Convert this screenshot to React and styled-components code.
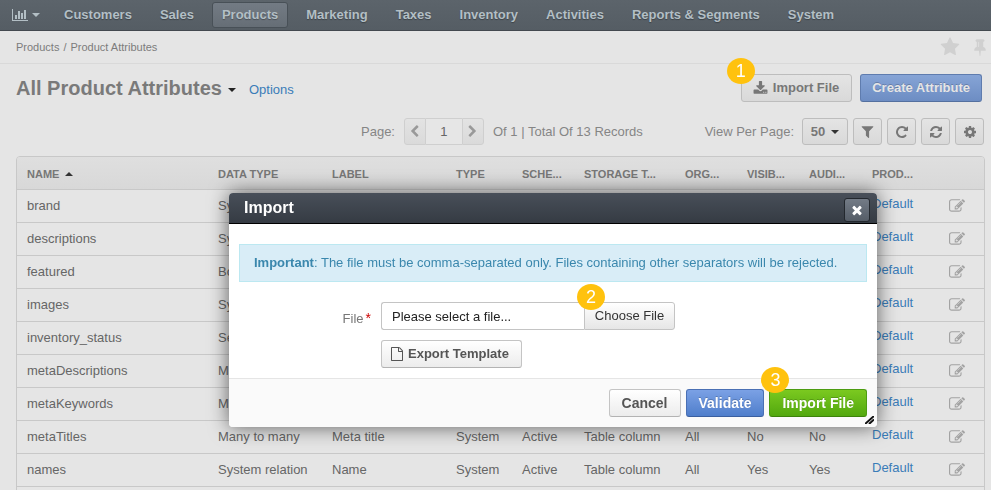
import React from "react";
import styled, { createGlobalStyle, css } from "styled-components";

const GlobalStyle = createGlobalStyle`
  *, *::before, *::after { box-sizing: border-box; }
  body {
    margin: 0;
    background: #e5e5e5;
    color: #666;
    font: 13px/18px "Liberation Sans", Arial, sans-serif;
  }
  button, input { font: inherit; color: inherit; margin: 0; }
  a { color: #3a7cb8; text-decoration: none; }
`;

/* ---------- icons ---------- */

const PATHS = {
  chart:
    "M640 896v512h-256v-512h256zm384-512v1024h-256v-1024h256zm1024 1152v128h-2048v-1536h128v1408h1920zm-640-896v768h-256v-768h256zm384-384v1152h-256v-1152h256z",
  download:
    "M1344 1344q0-26-19-45t-45-19-45 19-19 45 19 45 45 19 45-19 19-45zm256 0q0-26-19-45t-45-19-45 19-19 45 19 45 45 19 45-19 19-45zm128-224v320q0 40-28 68t-68 28h-1472q-40 0-68-28t-28-68v-320q0-40 28-68t68-28h465l135 136q58 56 136 56t136-56l136-136h464q40 0 68 28t28 68zm-325-569q17 41-14 70l-448 448q-18 19-45 19t-45-19l-448-448q-31-29-14-70 17-39 59-39h256v-448q0-26 19-45t45-19h256q26 0 45 19t19 45v448h256q42 0 59 39z",
  filter:
    "M1595 295q17 41-14 70l-493 493v742q0 42-39 59-13 5-25 5-27 0-45-19l-256-256q-19-19-19-45v-486l-493-493q-31-29-14-70 17-39 59-39h1280q42 0 59 39z",
  repeat:
    "M1664 256v448q0 26-19 45t-45 19h-448q-42 0-59-40-17-39 14-69l138-138q-148-137-349-137-104 0-198.5 40.5t-163.5 109.5-109.5 163.5-40.5 198.5 40.5 198.5 109.5 163.5 163.5 109.5 198.5 40.5q119 0 225-52t179-147q7-10 23-12 15 0 25 9l137 138q9 8 9.5 20.5t-7.5 22.5q-109 132-264 204.5t-327 72.5q-156 0-298-61t-245-164-164-245-61-298 61-298 164-245 245-164 298-61q147 0 284.5 55.5t244.5 156.5l130-129q29-31 70-14 39 17 39 59z",
  refresh:
    "M1639 1056q0 5-1 7-64 268-268 434.5t-478 166.5q-146 0-282.5-55t-243.5-157l-129 129q-19 19-45 19t-45-19-19-45v-448q0-26 19-45t45-19h448q26 0 45 19t19 45-19 45l-137 137q71 66 161 102t187 36q134 0 250-65t186-179q11-17 53-117 8-23 30-23h192q13 0 22.5 9.5t9.5 22.5zm25-800v448q0 26-19 45t-45 19h-448q-26 0-45-19t-19-45 19-45l138-138q-148-137-349-137-134 0-250 65t-186 179q-11 17-53 117-8 23-30 23h-199q-13 0-22.5-9.5t-9.5-22.5v-7q65-268 270-434.5t480-166.5q146 0 284 55.5t245 156.5l130-129q19-19 45-19t45 19 19 45z",
  cog:
    "M1152 896q0-106-75-181t-181-75-181 75-75 181 75 181 181 75 181-75 75-181zm512-109v222q0 12-8 23t-20 13l-185 28q-19 54-39 91 35 50 107 138 10 12 10 25t-9 23q-27 37-99 108t-94 71q-12 0-26-9l-138-108q-44 23-91 38-16 136-29 186-7 28-36 28h-222q-14 0-24.5-8.5t-11.5-21.5l-28-184q-49-16-90-37l-141 107q-10 9-25 9-14 0-25-11-126-114-165-168-7-10-7-23 0-12 8-23 15-21 51-66.5t54-70.5q-27-50-41-99l-183-27q-13-2-21-12.5t-8-23.5v-222q0-12 8-23t19-13l186-28q14-46 39-92-40-57-107-138-10-12-10-24 0-10 9-23 26-36 98.5-107.5t94.5-71.5q13 0 26 10l138 107q44-23 91-38 16-136 29-186 7-28 36-28h222q14 0 24.5 8.5t11.5 21.5l28 184q49 16 90 37l142-107q9-9 24-9 13 0 25 10 129 119 165 170 7 8 7 22 0 12-8 23-15 21-51 66.5t-54 70.5q26 50 41 98l183 28q13 2 21 12.5t8 23.5z",
  edit:
    "M888 1184l116-116-152-152-116 116v56h96v96h56zm440-720q-16-16-33 1l-350 350q-17 17-1 33t33-1l350-350q17-17 1-33zm80 594v190q0 119-84.5 203.5t-203.5 84.5h-832q-119 0-203.5-84.5t-84.5-203.5v-832q0-119 84.5-203.5t203.5-84.5h832q63 0 117 25 15 7 18 23 3 17-9 29l-49 49q-14 14-32 8-23-6-45-6h-832q-66 0-113 47t-47 113v832q0 66 47 113t113 47h832q66 0 113-47t47-113v-126q0-13 9-22l64-64q15-15 35-7t20 29zm-96-738l288 288-672 672h-288v-288zm444 132l-92 92-288-288 92-92q28-28 68-28t68 28l152 152q28 28 28 68t-28 68z",
  star:
    "M1728 647q0 22-26 48l-363 354 86 500q1 7 1 20 0 21-10.5 35.5t-30.5 14.5q-19 0-40-12l-449-236-449 236q-22 12-40 12-21 0-31.5-14.5t-10.5-35.5q0-6 2-20l86-500-364-354q-25-27-25-48 0-37 56-46l502-73 225-455q19-41 49-41t49 41l225 455 502 73q56 9 56 46z",
  pin:
    "M800 864v-448q0-14-9-23t-23-9-23 9-9 23v448q0 14 9 23t23 9 23-9 9-23zm672 352q0 26-19 45t-45 19h-429l-51 483q-2 12-10.5 20.5t-20.5 8.5h-1q-27 0-32-27l-76-485h-404q-26 0-45-19t-19-45q0-123 78.5-221.5t177.5-98.5v-512q-52 0-90-38t-38-90 38-90 90-38h640q52 0 90 38t38 90-38 90-90 38v512q99 0 177.5 98.5t78.5 221.5z",
  file:
    "M1596 380q28 28 48 76t20 88v1152q0 40-28 68t-68 28h-1344q-40 0-68-28t-28-68v-1600q0-40 28-68t68-28h896q40 0 88 20t76 48zm-444-244v376h376q-10-29-22-41l-313-313q-12-12-41-22zm384 1528v-1024h-416q-40 0-68-28t-28-68v-416h-768v1536h1280z",
  left:
    "M1427 301l-531 531 531 531q19 19 19 45t-19 45l-166 166q-19 19-45 19t-45-19l-742-742q-19-19-19-45t19-45l742-742q19-19 45-19t45 19l166 166q19 19 19 45t-19 45z",
  right:
    "M1363 877l-742 742q-19 19-45 19t-45-19l-166-166q-19-19-19-45t19-45l531-531-531-531q-19-19-19-45t19-45l166-166q19-19 45-19t45 19l742 742q19 19 19 45t-19 45z",
  close:
    "M1490 1322q0 40-28 68l-136 136q-28 28-68 28t-68-28l-294-294-294 294q-28 28-68 28t-68-28l-136-136q-28-28-28-68t28-68l294-294-294-294q-28-28-28-68t28-68l136-136q28-28 68-28t68 28l294 294 294-294q28-28 68-28t68 28l136 136q28 28 28 68t-28 68l-294 294 294 294q28 28 28 68z",
};

const Svg = styled.svg`
  display: block;
  flex: none;
  fill: currentColor;
`;

function Icon({ name, size = 14 }) {
  const wide = name === "chart";
  return (
    <Svg
      width={wide ? size + 2 : size}
      height={size}
      viewBox={wide ? "0 0 2048 1792" : "0 0 1792 1792"}
      aria-hidden="true"
    >
      <path d={PATHS[name]} />
    </Svg>
  );
}

const Caret = styled.span`
  display: inline-block;
  border: 4px solid transparent;
  ${(p) =>
    p.$up
      ? css`border-top: 0; border-bottom-color: currentColor;`
      : css`border-bottom: 0; border-top-color: currentColor;`}
`;

/* ---------- page chrome ---------- */

const Page = styled.div`
  height: 100vh;
  overflow: hidden;
`;

const Nav = styled.nav`
  display: flex;
  align-items: center;
  gap: 8px;
  height: 31px;
  padding: 0 12px;
  background: linear-gradient(#5c646b, #555d64);
  border-bottom: 1px solid #43494f;
  color: #b3bfc5;
`;

const Dashboard = styled.button`
  display: flex;
  align-items: center;
  gap: 4px;
  width: 34px;
  padding: 0;
  border: 0;
  background: none;
`;

const NavLink = styled.a`
  padding: 2px 9px;
  border: 1px solid transparent;
  border-radius: 3px;
  color: #b3bfc5;
  font-weight: bold;
  line-height: 20px;
  white-space: nowrap;
  text-shadow: 0 1px 1px rgba(0, 0, 0, 0.3);
  ${(p) =>
    p.$active &&
    css`
      background: linear-gradient(#737b84, #666e76);
      border-color: #485057;
    `}
`;

const Breadcrumbs = styled.div`
  display: flex;
  align-items: center;
  justify-content: space-between;
  height: 33px;
  padding: 0 2px 0 16px;
  border-bottom: 1px solid #d9d9d9;
  color: #7c7c7c;
  font-size: 11px;
`;

const Trail = styled.div`
  display: flex;
  gap: 4px;
`;

const Marks = styled.div`
  display: flex;
  gap: 11px;
  color: #d0d0d0;
`;

const MarkButton = styled.button`
  padding: 0;
  border: 0;
  background: none;
`;

const TitleBar = styled.header`
  display: flex;
  align-items: center;
  padding: 10px 9px 0 16px;
`;

const Title = styled.h1`
  margin: 0;
  color: #7a7a7a;
  font-size: 20px;
  line-height: 28px;
`;

const TitleCaret = styled.button`
  display: flex;
  margin: 3px 13px 0 6px;
  padding: 0;
  border: 0;
  background: none;
  color: #222;
`;

const OptionsLink = styled.a`
  padding-top: 3px;
`;

const Actions = styled.div`
  display: flex;
  gap: 8px;
  margin-left: auto;
`;

const Anchor = styled.div`
  position: relative;
`;

const Step = styled.span`
  position: absolute;
  z-index: 1;
  top: ${(p) => p.$top};
  left: ${(p) => p.$left};
  width: 28px;
  height: 26px;
  border-radius: 50%;
  background: #ffc20e;
  color: #fff;
  font-size: 18px;
  line-height: 27px;
  text-align: center;
  text-shadow: none;
`;

const tones = {
  dim: css`
    background: linear-gradient(#e4e4e4, #d9d9d9);
    border-color: #bdbdbd;
    color: #777;
  `,
  dimBlue: css`
    background: linear-gradient(#86a4d6, #6d8dc3);
    border-color: #5f7cae #5f7cae #54709f;
    color: #e5e5e5;
    text-shadow: 0 -1px 0 rgba(0, 0, 0, 0.2);
  `,
  light: css`
    background: linear-gradient(#fff, #ececec);
    border-color: #c4c4c4 #c4c4c4 #b3b3b3;
    color: #555;
  `,
  blue: css`
    background: linear-gradient(#7ba1e5, #4f7ecb);
    border-color: #4a70b4 #4a70b4 #3a5f9f;
    color: #fff;
    text-shadow: 0 -1px 0 rgba(0, 0, 0, 0.2);
  `,
  green: css`
    background: linear-gradient(#7bc920, #52a80e);
    border-color: #4d9c11 #4d9c11 #3c820a;
    color: #fff;
    text-shadow: 0 -1px 0 rgba(0, 0, 0, 0.2);
  `,
};

const Button = styled.button`
  display: flex;
  align-items: center;
  gap: 5px;
  height: 28px;
  padding: 0 11px;
  border: 1px solid;
  border-radius: 3px;
  font-weight: bold;
  white-space: nowrap;
  ${(p) => tones[p.$tone]}
`;

const ImportButton = styled(Button)`
  padding-right: 12px;
`;

/* ---------- grid ---------- */

const Toolbar = styled.div`
  display: flex;
  align-items: center;
  padding: 16px 7px 0 361px;
  color: #858585;
  white-space: nowrap;
`;

const Pager = styled.div`
  display: flex;
  margin: 0 9px;
`;

const PagerButton = styled.button`
  display: grid;
  place-items: center;
  width: 22px;
  height: 27px;
  padding: 0;
  border: 1px solid #cfcfcf;
  border-radius: ${(p) => (p.$end ? "0 3px 3px 0" : "3px 0 0 3px")};
  background: linear-gradient(#e3e3e3, #dadada);
  color: #999;
`;

const PagerInput = styled.input`
  width: 36px;
  height: 27px;
  padding: 0;
  border: 1px solid #cfcfcf;
  border-width: 1px 0;
  background: #e6e6e6;
  color: #666;
  text-align: center;
`;

const PerPage = styled.div`
  display: flex;
  align-items: center;
  gap: 8px;
  margin-left: auto;
`;

const ToolButton = styled.button`
  display: flex;
  align-items: center;
  justify-content: center;
  gap: 6px;
  width: ${(p) => (p.$wide ? "46px" : "29px")};
  height: 27px;
  padding: 0;
  border: 1px solid #bdbdbd;
  border-radius: 3px;
  background: linear-gradient(#e4e4e4, #d9d9d9);
  color: #777;
  font-weight: ${(p) => (p.$wide ? "bold" : "normal")};
`;

const DarkCaret = styled(Caret)`
  color: #333;
`;

const Tools = styled.div`
  display: flex;
  gap: 5px;
`;

const GridFrame = styled.div`
  margin: 11px 6px 0 16px;
  padding-bottom: 33px;
  border: 1px solid #c8c8c8;
  border-radius: 4px 4px 0 0;
  overflow: hidden;
`;

const Table = styled.table`
  width: 100%;
  table-layout: fixed;
  border-collapse: separate;
  border-spacing: 0;
`;

const Col = styled.col`
  width: ${(p) => p.$w};
`;

const Th = styled.th`
  height: 33px;
  padding: 2px 0 0 10px;
  border-bottom: 1px solid #c8c8c8;
  background: linear-gradient(#dfdfdf, #d8d8d8);
  color: #777;
  font-size: 11px;
  text-align: left;
  white-space: nowrap;
`;

const SortCaret = styled(Caret)`
  margin: 0 0 2px 6px;
  color: #333;
`;

const Td = styled.td`
  height: 33px;
  padding: ${(p) => (p.$raised ? "0 0 4px 10px" : "0 0 0 10px")};
  border-bottom: 1px solid #c8c8c8;
  white-space: nowrap;
  line-height: 18px;
`;

const EditButton = styled.button`
  display: block;
  padding: 0;
  border: 0;
  background: none;
  color: #a3a3a3;
`;

/* ---------- dialog ---------- */

const Overlay = styled.div`
  position: fixed;
  inset: 0;
  padding: 193px 114px 0 229px;
`;

const Dialog = styled.section`
  position: relative;
  border-radius: 4px;
  background: #fff;
  box-shadow: 0 0 20px rgba(0, 0, 0, 0.6);
`;

const DialogHeader = styled.header`
  display: flex;
  align-items: center;
  justify-content: space-between;
  height: 31px;
  padding: 0 7px 0 15px;
  border-bottom: 1px solid #000;
  border-radius: 4px 4px 0 0;
  background: linear-gradient(#484f59, #353b43);
  color: #fff;
`;

const DialogTitle = styled.h2`
  margin: 0;
  font-size: 16px;
  line-height: 30px;
`;

const CloseButton = styled.button`
  display: grid;
  place-items: center;
  width: 26px;
  height: 24px;
  margin-top: 4px;
  padding: 0;
  border: 1px solid #23282e;
  border-radius: 3px;
  background: linear-gradient(#737b86, #555d67);
`;

const Notice = styled.p`
  margin: 20px 10px 0;
  padding: 9px 14px;
  border: 1px solid #bce8f1;
  background: #d9edf7;
  color: #3a87ad;
`;

const FormGrid = styled.form`
  display: grid;
  grid-template-columns: 142px auto;
  justify-content: start;
  gap: 10px;
  padding: 20px 10px 10px 0;
`;

const Label = styled.label`
  padding-top: 8px;
  text-align: right;
  color: #777;
`;

const Required = styled.em`
  margin-left: 2px;
  color: #c00;
  font-size: 14px;
  font-style: normal;
  line-height: 14px;
`;

const FilePicker = styled.div`
  position: relative;
  display: flex;
`;

const FileName = styled.input`
  width: 203px;
  height: 28px;
  padding: 0 10px;
  border: 1px solid #c4c4c4;
  border-right: 0;
  border-radius: 3px 0 0 3px;
  color: #222;
`;

const ChooseButton = styled.button`
  width: 91px;
  height: 28px;
  padding: 0;
  border: 1px solid #c4c4c4;
  border-radius: 0 3px 3px 0;
  background: linear-gradient(#fff, #e6e6e6);
  color: #333;
`;

const TemplateRow = styled.div`
  display: flex;
  grid-column: 2;
`;

const TemplateButton = styled(Button)`
  gap: 4px;
  padding: 0 12px 0 8px;
`;

const Footer = styled.footer`
  display: flex;
  justify-content: flex-end;
  gap: 5px;
  padding: 10px;
  border-top: 1px solid #e5e5e5;
  border-radius: 0 0 4px 4px;
  background: #fafafa;
`;

const FooterButton = styled(Button)`
  padding: 0 12px;
  font-size: 14px;
`;

const Grip = styled.svg`
  position: absolute;
  right: 3px;
  bottom: 3px;
`;

const navItems = [
  "Customers",
  "Sales",
  "Products",
  "Marketing",
  "Taxes",
  "Inventory",
  "Activities",
  "Reports & Segments",
  "System",
];

const columns = [
  ["NAME", "auto"],
  ["DATA TYPE", "114px"],
  ["LABEL", "124px"],
  ["TYPE", "66px"],
  ["SCHE...", "62px"],
  ["STORAGE T...", "101px"],
  ["ORG...", "62px"],
  ["VISIB...", "62px"],
  ["AUDI...", "63px"],
  ["PROD...", "77px"],
  ["", "45px"],
];

const rows = [
  ["brand", "System relation", "Brand", "No"],
  ["descriptions", "System relation", "Description", "Yes"],
  ["featured", "Boolean", "Is Featured", "No"],
  ["images", "System relation", "Images", "Yes"],
  ["inventory_status", "Select", "Inventory Status", "Yes"],
  ["metaDescriptions", "Many to many", "Meta description", "No"],
  ["metaKeywords", "Many to many", "Meta keywords", "No"],
  ["metaTitles", "Many to many", "Meta title", "No"],
  ["names", "System relation", "Name", "Yes"],
];

function AttributeGrid() {
  return (
    <GridFrame>
      <Table>
        <colgroup>
          {columns.map(([name, width]) => (
            <Col key={name} $w={width} />
          ))}
        </colgroup>
        <thead>
          <tr>
            {columns.map(([name], i) => (
              <Th key={name} scope="col">
                {name}
                {i === 0 && <SortCaret $up />}
              </Th>
            ))}
          </tr>
        </thead>
        <tbody>
          {rows.map(([name, type, label, flag]) => (
            <tr key={name}>
              <Td>{name}</Td>
              <Td>{type}</Td>
              <Td>{label}</Td>
              <Td>System</Td>
              <Td>Active</Td>
              <Td>Table column</Td>
              <Td>All</Td>
              <Td>{flag}</Td>
              <Td>{flag}</Td>
              <Td $raised>
                <a href="#family">Default</a>
              </Td>
              <Td>
                <EditButton aria-label={`Edit ${name}`}>
                  <Icon name="edit" size={16} />
                </EditButton>
              </Td>
            </tr>
          ))}
        </tbody>
      </Table>
    </GridFrame>
  );
}

function ImportDialog() {
  return (
    <Overlay>
      <Dialog role="dialog" aria-labelledby="import-title">
        <DialogHeader>
          <DialogTitle id="import-title">Import</DialogTitle>
          <CloseButton aria-label="Close">
            <Icon name="close" size={14} />
          </CloseButton>
        </DialogHeader>
        <Notice>
          <strong>Important</strong>: The file must be comma-separated only. Files
          containing other separators will be rejected.
        </Notice>
        <FormGrid>
          <Label htmlFor="import-file">
            File<Required>*</Required>
          </Label>
          <FilePicker>
            <FileName id="import-file" readOnly value="Please select a file..." />
            <ChooseButton type="button">Choose File</ChooseButton>
            <Step $top="-18px" $left="196px">2</Step>
          </FilePicker>
          <TemplateRow>
            <TemplateButton type="button" $tone="light">
              <Icon name="file" size={14} />
              Export Template
            </TemplateButton>
          </TemplateRow>
        </FormGrid>
        <Footer>
          <FooterButton $tone="light">Cancel</FooterButton>
          <FooterButton $tone="blue">Validate</FooterButton>
          <Anchor>
            <FooterButton $tone="green">Import File</FooterButton>
            <Step $top="-22px" $left="-8px">3</Step>
          </Anchor>
        </Footer>
        <Grip width="9" height="8" viewBox="0 0 9 8" stroke="#111" strokeWidth="2">
          <path d="M0 8L9 0M4 8L9 3.5" />
        </Grip>
      </Dialog>
    </Overlay>
  );
}

export default function App() {
  return (
    <>
      <GlobalStyle />
      <Page>
        <Nav>
          <Dashboard aria-label="Dashboards">
            <Icon name="chart" size={14} />
            <Caret />
          </Dashboard>
          {navItems.map((item) => (
            <NavLink key={item} href="#nav" $active={item === "Products"}>
              {item}
            </NavLink>
          ))}
        </Nav>
        <Breadcrumbs>
          <Trail>
            <span>Products</span>
            <span>/</span>
            <span>Product Attributes</span>
          </Trail>
          <Marks>
            <MarkButton aria-label="Favorite">
              <Icon name="star" size={20} />
            </MarkButton>
            <MarkButton aria-label="Pin">
              <Icon name="pin" size={18} />
            </MarkButton>
          </Marks>
        </Breadcrumbs>
        <TitleBar>
          <Title>All Product Attributes</Title>
          <TitleCaret aria-label="Views">
            <Caret />
          </TitleCaret>
          <OptionsLink href="#options">Options</OptionsLink>
          <Actions>
            <Anchor>
              <ImportButton $tone="dim">
                <Icon name="download" size={15} />
                Import File
              </ImportButton>
              <Step $top="-16px" $left="-14px">1</Step>
            </Anchor>
            <Button $tone="dimBlue">Create Attribute</Button>
          </Actions>
        </TitleBar>
        <Toolbar>
          <label htmlFor="page-number">Page:</label>
          <Pager>
            <PagerButton aria-label="Previous page">
              <Icon name="left" size={13} />
            </PagerButton>
            <PagerInput id="page-number" defaultValue="1" />
            <PagerButton $end aria-label="Next page">
              <Icon name="right" size={13} />
            </PagerButton>
          </Pager>
          <span>Of 1 | Total Of 13 Records</span>
          <PerPage>
            <span>View Per Page:</span>
            <Tools>
              <ToolButton $wide aria-label="50 per page">
                50
                <DarkCaret />
              </ToolButton>
              <ToolButton aria-label="Filters">
                <Icon name="filter" size={15} />
              </ToolButton>
              <ToolButton aria-label="Reset">
                <Icon name="repeat" />
              </ToolButton>
              <ToolButton aria-label="Refresh">
                <Icon name="refresh" />
              </ToolButton>
              <ToolButton aria-label="Grid settings">
                <Icon name="cog" />
              </ToolButton>
            </Tools>
          </PerPage>
        </Toolbar>
        <AttributeGrid />
      </Page>
      <ImportDialog />
    </>
  );
}
